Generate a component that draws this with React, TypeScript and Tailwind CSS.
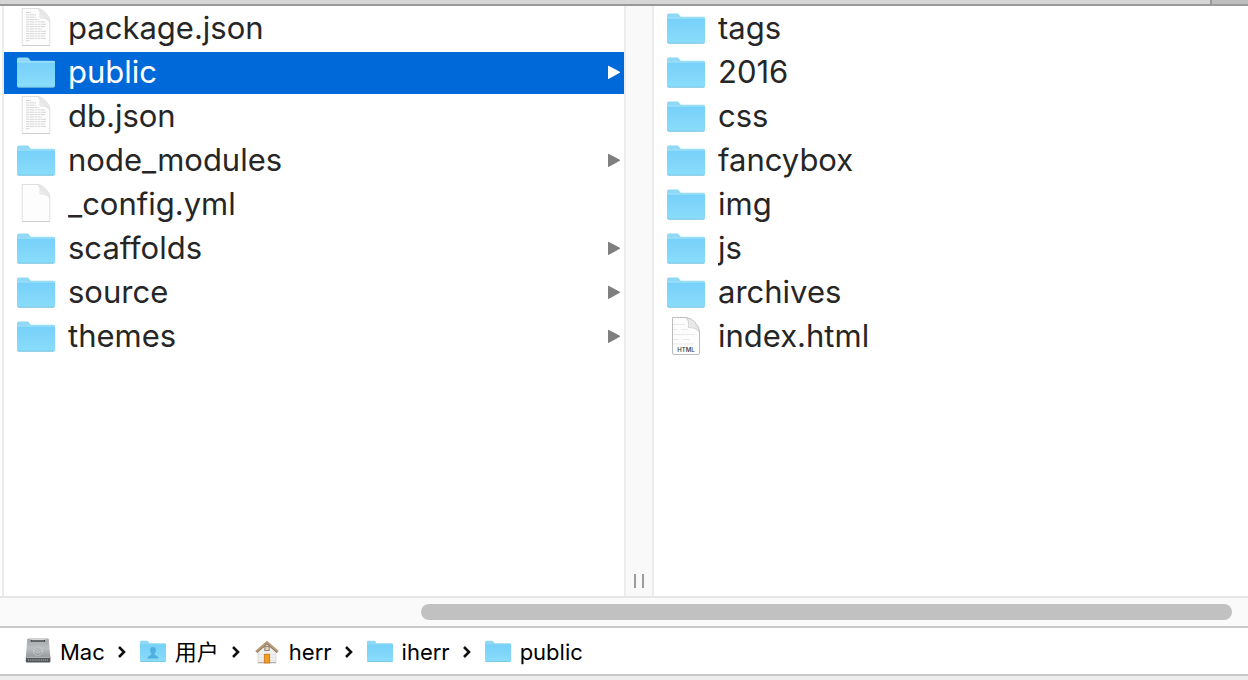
import { Fragment } from "react";

type Kind = "folder" | "text" | "blank" | "html";
type Entry = { name: string; kind: Kind; selected?: boolean };

const parentEntries: Entry[] = [
  { name: "package.json", kind: "text" },
  { name: "public", kind: "folder", selected: true },
  { name: "db.json", kind: "text" },
  { name: "node_modules", kind: "folder" },
  { name: "_config.yml", kind: "blank" },
  { name: "scaffolds", kind: "folder" },
  { name: "source", kind: "folder" },
  { name: "themes", kind: "folder" },
];

const childEntries: Entry[] = [
  { name: "tags", kind: "folder" },
  { name: "2016", kind: "folder" },
  { name: "css", kind: "folder" },
  { name: "fancybox", kind: "folder" },
  { name: "img", kind: "folder" },
  { name: "js", kind: "folder" },
  { name: "archives", kind: "folder" },
  { name: "index.html", kind: "html" },
];

type PathKind = "drive" | "users" | "home" | "folder";
const path: { name: string; kind: PathKind }[] = [
  { name: "Mac", kind: "drive" },
  { name: "用户", kind: "users" },
  { name: "herr", kind: "home" },
  { name: "iherr", kind: "folder" },
  { name: "public", kind: "folder" },
];

function Gradients() {
  return (
    <svg className="absolute size-0" aria-hidden="true">
      <defs>
        <linearGradient id="folderBody" x1="0" y1="0" x2="0" y2="1">
          <stop offset="0" stopColor="#76d0f9" />
          <stop offset="1" stopColor="#8addfb" />
        </linearGradient>
        <linearGradient id="paperFold" x1="0" y1="1" x2="1" y2="0">
          <stop offset="0" stopColor="#ffffff" />
          <stop offset="0.5" stopColor="#e6e6e6" />
          <stop offset="1" stopColor="#fafafa" />
        </linearGradient>
        <linearGradient id="metal" x1="0" y1="0" x2="0" y2="1">
          <stop offset="0" stopColor="#a3a6a8" />
          <stop offset="0.5" stopColor="#bcbfc1" />
          <stop offset="1" stopColor="#96999b" />
        </linearGradient>
      </defs>
    </svg>
  );
}

function FolderShape() {
  return (
    <>
      <path d="M1 34V7.2Q1 5.5 2.7 5.5H11.2Q12.3 5.5 13 6.6L14.6 8.8H37.5Q39 8.8 39 10.3V34Z" fill="#8fd8f6" />
      <path d="M1 10.4H39V33.8Q39 35.2 37.6 35.2H2.4Q1 35.2 1 33.8Z" fill="url(#folderBody)" />
      <path d="M1 10H39" stroke="#9de2fb" strokeWidth="1" />
      <path d="M1.4 34.6Q1.8 35.2 2.6 35.2H37.4Q38.2 35.2 38.6 34.6" stroke="#74c0df" strokeWidth="1" fill="none" />
    </>
  );
}

const textLines = [
  [10, 15], [10, 20], [10, 20], [10, 23], [10, 29], [10, 30], [10, 29],
  [10, 26], [10, 30], [10, 30], [10, 29], [10, 30], [10, 14],
];

function FileIcon({ kind }: { kind: Kind }) {
  return (
    <svg className="h-[42px] w-10 shrink-0" viewBox="0 0 40 42" aria-hidden="true">
      {kind === "folder" && <FolderShape />}
      {(kind === "text" || kind === "blank") && (
        <>
          <path d="M6.2 0.5H22Q25.5 0.8 28 3.4L31 6.6Q33.8 9.6 33.8 14V37.5H6.2Z" fill="#fdfdfd" stroke="#e0e0e0" />
          <path d="M6 37.5H34" stroke="#cfcfcf" />
          <path d="M22 0.5Q24.8 3.4 24 10Q31 9.8 33.8 14Q33.4 9.6 30 5.8Q26 1.2 22 0.5Z" fill="url(#paperFold)" stroke="#e0e0e0" strokeWidth="0.7" />
          {kind === "text" &&
            textLines.map(([from, to], i) => (
              <path key={i} d={`M${from} ${4.5 + i * 2.35}H${to}`} stroke="#d6d6d6" strokeWidth="1" strokeDasharray="3 0.5 5 0.6 2 0.5" />
            ))}
        </>
      )}
      {kind === "html" && (
        <>
          <path d="M6.5 1.5H20Q25 2 28.5 5.8Q33.5 11 33.5 16V37Q33.5 38.5 32 38.5H8Q6.5 38.5 6.5 37Z" fill="#fdfdfd" stroke="#bcbcbc" />
          <path d="M20 1.7Q23.4 4.5 22.4 11.6Q30 11.4 33.3 16Q33 11 28.5 6Q24.5 2 20 1.7Z" fill="url(#paperFold)" stroke="#c6c6c6" strokeWidth="0.7" />
          <path d="M7 8.5H19M7 13.5H11M15 13.5H22M7 18.5H28M7 23.5H13M16 23.5H24M7 28H28" stroke="#e6e6e6" strokeWidth="0.9" />
          <text x="20" y="36" textAnchor="middle" fontSize="6" fontWeight="500" fill="#333333" fontFamily="Inter, sans-serif">
            HTML
          </text>
        </>
      )}
    </svg>
  );
}

function PathIcon({ kind }: { kind: PathKind }) {
  if (kind === "drive") {
    return (
      <svg className="size-7 shrink-0" viewBox="0 0 28 28" aria-hidden="true">
        <path d="M4.6 1.4H23.4Q24.6 1.4 24.8 2.6L26.4 20.5H1.8L3.2 2.6Q3.4 1.4 4.6 1.4Z" fill="url(#metal)" />
        <path d="M6 2.6H21.8" stroke="#d5d7d8" strokeWidth="1.4" />
        <path d="M7.2 4H20.6" stroke="#333638" strokeWidth="1.2" />
        <path d="M7.2 2.8V4.6M20.6 2.8V4.6" stroke="#333638" strokeWidth="1" />
        <ellipse cx="14" cy="14" rx="4.6" ry="4.2" fill="#b4b8ba" stroke="#cbced0" strokeWidth="0.8" />
        <path d="M10.6 15.6Q14 19.6 17.4 15.6" stroke="#8b8f91" fill="none" strokeWidth="0.9" />
        <path d="M1.8 20.3H26.4V24.2Q26.4 25.6 25 25.6H3.2Q1.8 25.6 1.8 24.2Z" fill="#535658" />
        <path d="M2.3 20.4H25.9" stroke="#c9cccd" strokeWidth="0.8" />
        <path d="M4 23H24" stroke="#85888a" strokeWidth="1.8" strokeDasharray="1.2 0.9" />
      </svg>
    );
  }
  if (kind === "home") {
    return (
      <svg className="size-7 shrink-0" viewBox="0 0 28 28" aria-hidden="true">
        <path d="M5 14L14 6L23 14V26H5Z" fill="#f0f0ee" stroke="#cfcfcd" strokeWidth="0.7" />
        <path d="M5.5 17.5H22.5M5.5 20.5H22.5M5.5 23.5H22.5" stroke="#dededc" strokeWidth="0.7" />
        <path d="M5 25.6H23" stroke="#aaa9a5" />
        <path d="M3.4 15.2L14 6L24.6 15.2" fill="none" stroke="#8d765b" strokeWidth="2.4" />
        <path d="M3 14.5L14 5L25 14.5" fill="none" stroke="#b99d79" strokeWidth="2" />
        <rect x="11.8" y="9.6" width="4.4" height="4" fill="#ddd4ca" stroke="#8f7561" strokeWidth="0.9" />
        <rect x="11.3" y="17.2" width="5.4" height="8.8" fill="#f39a21" stroke="#c57416" strokeWidth="0.8" />
      </svg>
    );
  }
  return (
    <svg className="size-7 shrink-0" viewBox="0 0 28 28" aria-hidden="true">
      <path d="M1 24V5Q1 3.8 2.2 3.8H8Q8.9 3.8 9.4 4.6L10.5 6.2H25.8Q27 6.2 27 7.4V24Z" fill="#8fd8f6" />
      <path d="M1 7.4H27V23.8Q27 24.8 26 24.8H2Q1 24.8 1 23.8Z" fill="url(#folderBody)" />
      <path d="M1.5 24.5H26.5" stroke="#74c0df" strokeWidth="0.8" />
      {kind === "users" && (
        <path d="M14 10C11.8 10 10.9 11.5 11.1 13.5C11.3 15.2 12 16 12.4 16.7C12.4 18.6 8.8 18.6 8.3 21.5H19.7C19.2 18.6 15.6 18.6 15.6 16.7C16 16 16.7 15.2 16.9 13.5C17.1 11.5 16.2 10 14 10Z" fill="#4fb0de" />
      )}
    </svg>
  );
}

function Column({ entries, label, arrows }: { entries: Entry[]; label: string; arrows?: boolean }) {
  return (
    <ul aria-label={label} className="flex flex-col gap-0.5 pt-0.5">
      {entries.map((entry) => (
        <li key={entry.name}>
          <button
            type="button"
            className={`flex h-[42px] w-full items-center gap-3 pr-1 pl-3 text-left ${
              entry.selected ? "bg-[#0069d9] text-white" : "text-[#262626]"
            }`}
          >
            <FileIcon kind={entry.kind} />
            <span className="flex-1 truncate pb-0.5 text-[31px] leading-10">{entry.name}</span>
            {arrows && entry.kind === "folder" && (
              <svg className={`h-4 w-3 shrink-0 ${entry.selected ? "text-white" : "text-[#7f7f7f]"}`} viewBox="0 0 12 16" aria-hidden="true">
                <path d="M0 1.6Q0 0.5 1 1L11.4 6.4Q12.6 7.2 11.4 8L1 13.8Q0 14.3 0 13.2Z" fill="currentColor" />
              </svg>
            )}
          </button>
        </li>
      ))}
    </ul>
  );
}

export default function App() {
  return (
    <div className="flex min-h-screen flex-col bg-[#ececec] font-['Inter','Noto_Sans_CJK_SC',sans-serif]">
      <Gradients />
      <header className="flex h-1.5 border-b-2 border-[#999999] bg-[#d6d6d6]">
        <div className="flex-1" />
        <div className="w-[38px] border-l-2 border-[#999999] bg-[#bebebe]" />
      </header>

      <main className="flex flex-1 bg-white">
        <section className="w-1/2 pl-0.5">
          <div className="h-full border-l-2 border-[#ececec]">
            <Column entries={parentEntries} label="iherr" arrows />
          </div>
        </section>
        <div className="flex w-[30px] items-end justify-center border-x-2 border-[#ececec] bg-[#f9f9f9] pb-2">
          <div className="flex h-3.5 w-2.5 justify-between border-x-2 border-[#9d9d9d]" />
        </div>
        <section className="flex-1">
          <Column entries={childEntries} label="public" />
        </section>
      </main>

      <div className="border-t-2 border-[#e6e6e6] bg-[#fafafa] py-1.5 pr-4">
        <div className="ml-auto h-4 w-[65.8%] rounded-full bg-[#c1c1c1]" />
      </div>

      <nav aria-label="Path" className="mb-1 border-y-2 border-[#c9c9c9] bg-white">
        <ol className="flex h-[46px] items-center gap-3 pl-6 text-[22px] leading-7 text-black">
          {path.map((step, i) => (
            <Fragment key={step.name}>
              {i > 0 && (
                <li aria-hidden="true">
                  <svg className="h-4 w-2.5" viewBox="0 0 10 16">
                    <path d="M2 4L7 9L2 14" fill="none" stroke="#111111" strokeWidth="2.6" />
                  </svg>
                </li>
              )}
              <li>
                <a href="#" className="flex items-center gap-2">
                  <PathIcon kind={step.kind} />
                  <span className="pt-0.5">{step.name}</span>
                </a>
              </li>
            </Fragment>
          ))}
        </ol>
      </nav>
    </div>
  );
}
